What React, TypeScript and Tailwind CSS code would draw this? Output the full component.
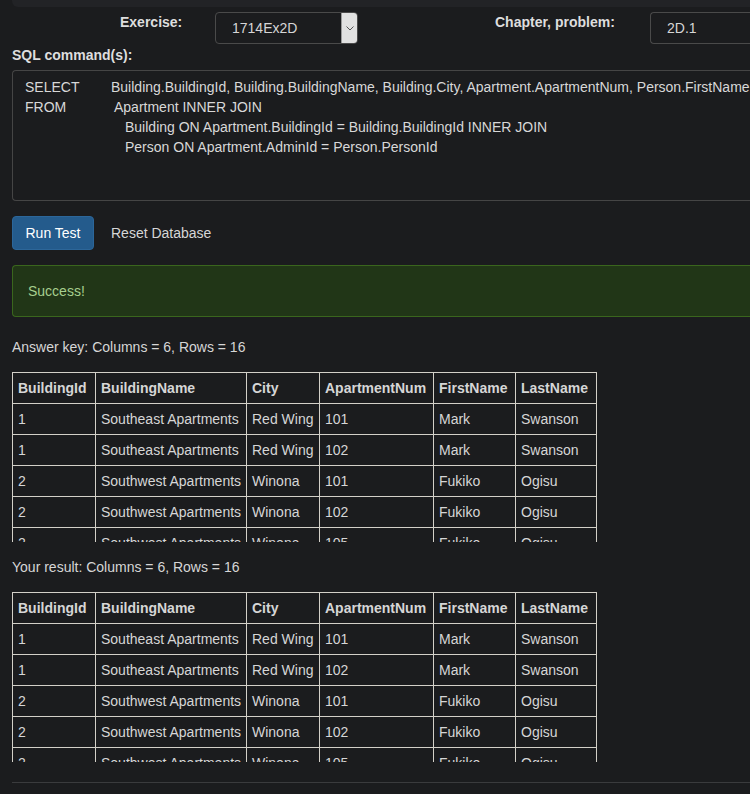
import React from "react"

const rows = [
    ["1", "Southeast Apartments", "Red Wing", "101", "Mark", "Swanson"],
    ["1", "Southeast Apartments", "Red Wing", "102", "Mark", "Swanson"],
    ["2", "Southwest Apartments", "Winona", "101", "Fukiko", "Ogisu"],
    ["2", "Southwest Apartments", "Winona", "102", "Fukiko", "Ogisu"],
    ["2", "Southwest Apartments", "Winona", "105", "Fukiko", "Ogisu"],
    ["2", "Southwest Apartments", "Winona", "106", "Fukiko", "Ogisu"],
]

const headers = ["BuildingId", "BuildingName", "City", "ApartmentNum", "FirstName", "LastName"]

function ResultTable(props: { label: string }) {
    return (
        <div>
            <div className="h-5 leading-5 text-[#d6d6d6]">{props.label}</div>
            <div className="mt-[15px] h-[170px] overflow-hidden">
                <table className="w-[584px] table-fixed border-collapse">
                    <colgroup>
                        <col className="w-[83px]" />
                        <col className="w-[151px]" />
                        <col className="w-[73px]" />
                        <col className="w-[114px]" />
                        <col className="w-[82px]" />
                        <col className="w-[81px]" />
                    </colgroup>
                    <thead>
                        <tr>
                            {headers.map((h) => (
                                <th
                                    key={h}
                                    className="border border-[#d3d0c8] py-[5px] pr-0 pl-[5px] text-left font-bold leading-5 whitespace-nowrap"
                                >
                                    {h}
                                </th>
                            ))}
                        </tr>
                    </thead>
                    <tbody>
                        {rows.map((r, i) => (
                            <tr key={i}>
                                {r.map((c, j) => (
                                    <td
                                        key={j}
                                        className="border border-[#d3d0c8] py-[5px] pr-0 pl-[5px] leading-5 whitespace-nowrap"
                                    >
                                        {c}
                                    </td>
                                ))}
                            </tr>
                        ))}
                    </tbody>
                </table>
            </div>
        </div>
    )
}

export default function App() {
    return (
        <div className="h-[794px] overflow-hidden bg-[#1b1c1e] font-['Liberation_Sans',Arial,sans-serif] text-sm text-[#d6d6d6]">
            <div className="ml-3 h-[7px] rounded-bl-md bg-[#222326]" />

            <div className="flex h-[38px] items-start pt-[5px]">
                <div className="ml-[120px] w-[65px] shrink-0 font-bold leading-5 text-[#dedede]">Exercise:</div>
                <div className="ml-[30px] flex h-8 w-[143px] shrink-0 items-stretch rounded-[4px] border border-[#4a4a4a] bg-[#1b1c1e]">
                    <div className="flex-1 pl-4 leading-[30px]">1714Ex2D</div>
                    <div className="flex w-[16px] items-center justify-center rounded-r-[3px] border-l border-[#9a9a9a] bg-[#e1e1e1]">
                        <svg width="8" height="5" viewBox="0 0 8 5" fill="none">
                            <path d="M0.5 0.5 L4 4 L7.5 0.5" stroke="#555" strokeWidth="1" />
                        </svg>
                    </div>
                </div>
                <div className="ml-[137px] w-[125px] shrink-0 font-bold leading-5 text-[#dedede]">
                    Chapter, problem:
                </div>
                <div className="ml-[30px] h-8 flex-1 rounded-l-[4px] border border-r-0 border-[#4a4a4a] pl-4 leading-[30px]">
                    2D.1
                </div>
            </div>

            <div className="ml-3 font-bold leading-5 text-[#dedede]">SQL command(s):</div>

            <div className="mt-[5px] ml-3 h-[131px] overflow-hidden rounded-l-[4px] border border-r-0 border-[#454545] px-3 pt-[6px] leading-5 whitespace-nowrap text-[#d8d8d8]">
                <div className="flex">
                    <span className="w-[86px] shrink-0">SELECT</span>
                    <span className="shrink-0">
                        Building.BuildingId, Building.BuildingName, Building.City, Apartment.ApartmentNum,
                        Person.FirstName, Person.LastName
                    </span>
                </div>
                <div className="flex">
                    <span className="w-[89px] shrink-0">FROM</span>
                    <span>Apartment INNER JOIN</span>
                </div>
                <div className="pl-[100px]">Building ON Apartment.BuildingId = Building.BuildingId INNER JOIN</div>
                <div className="pl-[100px]">Person ON Apartment.AdminId = Person.PersonId</div>
            </div>

            <div className="mt-[15px] ml-3 flex items-center gap-[17px]">
                <button className="h-[34px] w-[82px] rounded-[4px] border border-[#2c6699] bg-[#245b8c] leading-5 text-white">
                    Run Test
                </button>
                <button className="h-[34px] leading-5 text-[#d6d6d6]">Reset Database</button>
            </div>

            <div className="mt-[15px] ml-3 h-[52px] rounded-l-[4px] border border-r-0 border-[#3a661d] bg-[#213617] pl-[15px] leading-[50px] text-[#a6cf8e]">
                Success!
            </div>

            <div className="mt-5 ml-3 flex flex-col gap-[15px]">
                <ResultTable label="Answer key: Columns = 6, Rows = 16" />
                <ResultTable label="Your result: Columns = 6, Rows = 16" />
            </div>

            <hr className="mt-5 ml-3 border-t border-[#3a3b3d]" />
        </div>
    )
}
